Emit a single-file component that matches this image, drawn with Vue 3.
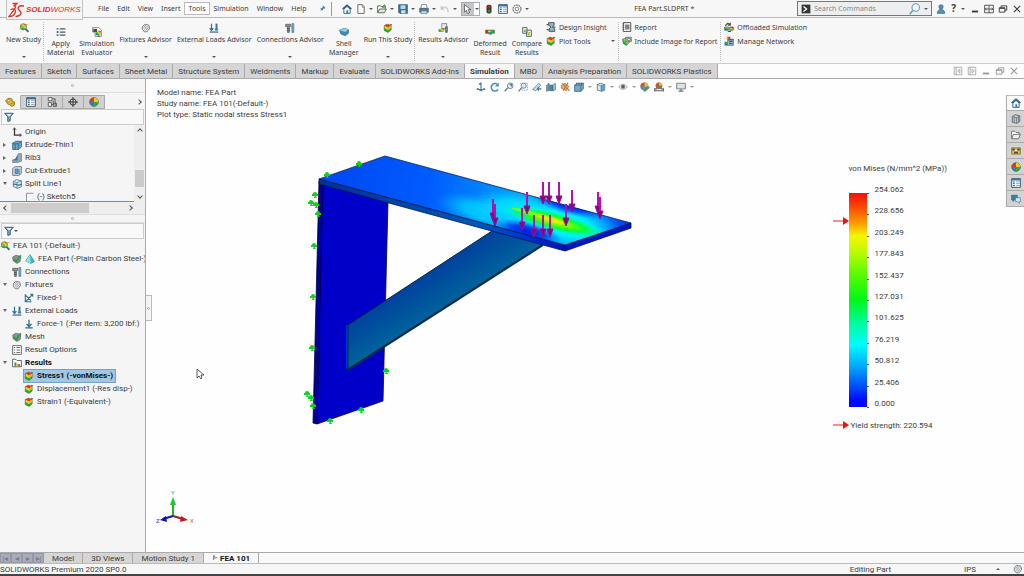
<template>
  <div class="app">
    <!-- icon sprite -->
    <svg class="sprite" aria-hidden="true">
      <defs>
        <linearGradient id="rainbow" x1="0" y1="1" x2="1" y2="0">
          <stop offset="0.1" stop-color="#2457d8" />
          <stop offset="0.35" stop-color="#17c84a" />
          <stop offset="0.6" stop-color="#e8e020" />
          <stop offset="0.85" stop-color="#e8281c" />
        </linearGradient>
      </defs>
      <symbol id="i-study" viewBox="0 0 16 16">
        <circle cx="7" cy="6" r="5" fill="url(#rainbow)" stroke="#596a75" />
        <path d="M10 9l5 5" stroke="#3d6d8d" stroke-width="3" />
        <path d="M1 10l5-5M9 4l5-2" stroke="#d6ac23" stroke-width="2" />
      </symbol>
      <symbol id="i-material" viewBox="0 0 16 16">
        <path d="M6 3h9M6 8h9M6 13h9" stroke="#4d5861" stroke-width="2" />
        <path d="M1 3h3" stroke="#4a90c0" stroke-width="3" />
        <path d="M1 8h3M1 13h3" stroke="#68727a" stroke-width="3" />
      </symbol>
      <symbol id="i-evaluator" viewBox="0 0 16 16">
        <path d="M3 1h8l4 4v10H5V8H1V1z" fill="#fff" stroke="#555" />
        <path d="M6 6h8v7H6z" fill="url(#rainbow)" />
        <path d="M2 3h6v5H2z" fill="#444c52" />
        <path d="M9 14l3 1" stroke="#445" stroke-width="2" />
      </symbol>
      <symbol id="i-fixture" viewBox="0 0 16 16">
        <path d="M2 6l4-4 6 1 2 5-4 6-5 0-3-4z" fill="#dde0e2" stroke="#777f84" stroke-width="1.4" />
        <path d="M5 10l5-5M7 12l5-5M4 7l4-4" stroke="#777f84" />
      </symbol>
      <symbol id="i-loads" viewBox="0 0 16 16">
        <path d="M4 1v10M1 8l3 4 3-4" fill="none" stroke="#356f95" stroke-width="2" />
        <path d="M12 1v9" stroke="#356f95" stroke-width="3" />
        <circle cx="12" cy="10" r="2.600" fill="#4a8cb5" />
        <path d="M1 14.500h14" stroke="#4c6b7e" stroke-width="2" />
      </symbol>
      <symbol id="i-connect" viewBox="0 0 16 16">
        <path d="M1 2h8v4H7v9H4V6H1z" fill="#858c91" stroke="#4b5359" />
        <path d="M3 9h5M3 12h5" stroke="#3c4348" />
        <path d="M11 1h3v14h-3z" fill="#79a9c5" stroke="#426d88" />
      </symbol>
      <symbol id="i-shell" viewBox="0 0 16 16">
        <path d="M1 5l7-3 7 2v6l-5 4-7-3z" fill="#3b8fb5" stroke="#245a74" />
        <path d="M1 5l7-3 7 2-5 4z" fill="#8fd0ea" />
      </symbol>
      <symbol id="i-plot" viewBox="0 0 16 16">
        <path d="M2 4l5-2 6 2v7l-5 4-6-3z" fill="#e8d922" stroke="#40583e" />
        <path d="M2 4l6 3 5-3-6-2z" fill="#e5371f" />
        <path d="M8 7l5-3v4l-5 4z" fill="#f0b41e" />
        <path d="M8 12l5-4v3l-5 4z" fill="#17a93f" />
        <path d="M2 8l6 3v4l-6-3z" fill="#17a93f" />
        <path d="M11 1l4 1-3 3z" fill="#6b7378" />
      </symbol>
      <symbol id="i-results" viewBox="0 0 16 16">
        <path d="M6 1h8v8H6z" fill="#e8eaeb" stroke="#4f5b64" />
        <path d="M1 9h9v5H1z" fill="url(#rainbow)" />
        <path d="M12 6h3v9h-3z" fill="#6d8799" stroke="#3d5565" />
      </symbol>
      <symbol id="i-deformed" viewBox="0 0 16 16">
        <path d="M1 5h14v5H1z" fill="#25b838" stroke="#365" />
        <path d="M1 5h4v5H1z" fill="#e22" />
        <path d="M5 6h4v2H5z" fill="#efdf1e" />
        <path d="M6 10h5v2H6z" fill="#2565bd" />
      </symbol>
      <symbol id="i-compare" viewBox="0 0 16 16">
        <path d="M1 1h7v9H1zM7 5h8v10H7z" fill="#edf0f1" stroke="#4d5a63" stroke-width="1.400" />
        <path d="M3 4h4v4H3zM9 8h4v5H9z" fill="url(#rainbow)" />
      </symbol>
      <symbol id="i-insight" viewBox="0 0 16 16">
        <path d="M4 1h9v4l-3 3 4 3v4H5v-4l3-3-4-3z" fill="#8bb5cb" stroke="#47565f" stroke-width="1.500" />
        <path d="M1 4h4M1 12h5M11 8h4" stroke="#555" stroke-width="2" />
      </symbol>
      <symbol id="i-report" viewBox="0 0 16 16">
        <path d="M2 1h12v14H2z" fill="#fff" stroke="#444" stroke-width="1.500" />
        <path d="M5 4h7v8H5z" fill="#7a8287" />
        <path d="M1 3h3M1 6h3M1 9h3M1 12h3" stroke="#444" />
      </symbol>
      <symbol id="i-image" viewBox="0 0 16 16">
        <path d="M1 5l6-2 5 2-1 6-4 4-5-3z" fill="url(#rainbow)" stroke="#555" />
        <path d="M6 2h9v7H6z" fill="#a4b0b6" stroke="#555d62" />
        <circle cx="11" cy="5.500" r="2" fill="#f2f2f2" stroke="#555" />
      </symbol>
      <symbol id="i-offload" viewBox="0 0 16 16">
        <path d="M1 8h6v5H1zM9 8h6v5H9z" fill="url(#rainbow)" stroke="#4c5357" />
        <path d="M2 6l4-4 4 2M10 1v4H6M6 15h5" fill="none" stroke="#4c5357" stroke-width="2" />
      </symbol>
      <symbol id="i-network" viewBox="0 0 16 16">
        <path d="M4 1h6v4H4zM1 9h6v6H1z" fill="url(#rainbow)" />
        <path d="M6 5h9v10H6z" fill="#b6cbd8" stroke="#445b69" />
        <path d="M6 6h9M8 9h6M8 12h6" stroke="#315d80" stroke-width="2" />
      </symbol>
      <symbol id="i-home" viewBox="0 0 16 16">
        <path d="M3 8v7h10V8L8 4z" fill="#fff" stroke="#2d668c" stroke-width="1.500" />
        <path d="M1 8l7-6 7 6" fill="none" stroke="#24597d" stroke-width="2.400" />
        <path d="M7 10h3v5H7z" fill="#397ba3" />
      </symbol>
      <symbol id="i-doc" viewBox="0 0 16 16">
        <path d="M3 1h7l3 3v11H3z" fill="#fff" stroke="#555" stroke-width="1.400" />
        <path d="M10 1v4h3" fill="none" stroke="#555" />
      </symbol>
      <symbol id="i-open" viewBox="0 0 16 16">
        <path d="M1 14V3h5l2 2h5v3" fill="#fff" stroke="#555" stroke-width="1.400" />
        <path d="M1 14l3-6h11l-3 6z" fill="#dce7d8" stroke="#556052" stroke-width="1.400" />
        <path d="M8 5l4-3 2 3" fill="none" stroke="#45924a" stroke-width="2" />
      </symbol>
      <symbol id="i-files" viewBox="0 0 16 16">
        <path d="M1 14V2h5l2 2h5v3" fill="#fff" stroke="#666" stroke-width="1.400" />
        <path d="M1 14l3-7h11l-3 7z" fill="#eee" stroke="#666" stroke-width="1.400" />
      </symbol>
      <symbol id="i-save" viewBox="0 0 16 16">
        <path d="M1 1h14v14H3l-2-2z" fill="#376f97" stroke="#244e6c" />
        <path d="M4 2h8v6H4z" fill="#bed5e4" />
        <path d="M5 10h7v5H5z" fill="#dadfe3" />
      </symbol>
      <symbol id="i-print" viewBox="0 0 16 16">
        <path d="M4 1h8l1 6H3z" fill="#fff" stroke="#555" />
        <path d="M1 7h14v6H1z" fill="#57819b" stroke="#34546a" />
        <path d="M3 11h10v4H3z" fill="#d7e8f1" stroke="#34546a" />
      </symbol>
      <symbol id="i-undo" viewBox="0 0 16 16">
        <path d="M2 3v5h5M2 8c5-6 11-3 11 5" fill="none" stroke="#c5c9cb" stroke-width="2" />
      </symbol>
      <symbol id="i-cursor" viewBox="0 0 16 16">
        <path d="M4 1v12l3-3 2 5 3-1-2-5h4z" fill="#fff" stroke="#333" />
      </symbol>
      <symbol id="i-traffic" viewBox="0 0 16 16">
        <rect x="4" y="1" width="8" height="14" rx="3" fill="#333" />
        <circle cx="8" cy="4.500" r="2.500" fill="#d3201e" />
        <circle cx="8" cy="11" r="2.500" fill="#2f8b38" />
      </symbol>
      <symbol id="i-list" viewBox="0 0 16 16">
        <path d="M1 1h14v14H1z" fill="#fff" stroke="#3c5666" stroke-width="1.500" />
        <path d="M1 2.500h14" stroke="#3676a3" stroke-width="3" />
        <path d="M3 6h3M3 9h3M3 12h3" stroke="#3676a3" stroke-width="2" />
        <path d="M8 6h6M8 9h6M8 12h6" stroke="#68757d" />
      </symbol>
      <symbol id="i-gear" viewBox="0 0 16 16">
        <circle cx="8" cy="8" r="6.400" fill="#fff" stroke="#777" stroke-width="2" stroke-dasharray="3 1" />
        <circle cx="8" cy="8" r="3" fill="none" stroke="#777" stroke-width="1.400" />
      </symbol>
      <symbol id="i-pin" viewBox="0 0 16 16">
        <path d="M9 1l6 6-2 1-3 0-2 5-2-2-5 4 4-5-2-2 5-2z" fill="#357eaf" />
      </symbol>
      <symbol id="i-prompt" viewBox="0 0 16 16">
        <path d="M1 1h14v14H1z" fill="#34373a" />
        <path d="M4 4l5 4-5 4" fill="none" stroke="#fff" stroke-width="2" />
      </symbol>
      <symbol id="i-search" viewBox="0 0 16 16">
        <circle cx="9" cy="6" r="5" fill="#eef6fa" stroke="#6d9bba" stroke-width="1.500" />
        <path d="M5 10l-4 5" stroke="#6d9bba" stroke-width="2" />
      </symbol>
      <symbol id="i-user" viewBox="0 0 16 16">
        <circle cx="8" cy="4.500" r="3.500" fill="#4e91ba" stroke="#2e6589" />
        <path d="M2 15c0-9 12-9 12 0z" fill="#4e91ba" stroke="#2e6589" />
      </symbol>
      <symbol id="i-min" viewBox="0 0 16 16">
        <path d="M3 12h10" stroke="currentColor" stroke-width="3" />
      </symbol>
      <symbol id="i-span" viewBox="0 0 16 16">
        <path d="M1 2h14v12H1zM8 2v12M2 8h12M4 6L2 8l2 2M12 6l2 2-2 2" fill="none" stroke="currentColor" stroke-width="1.300" />
      </symbol>
      <symbol id="i-restore" viewBox="0 0 16 16">
        <path d="M5 6V3h9v7h-3M2 6h9v7H2zM2 7h9" fill="none" stroke="currentColor" stroke-width="1.500" />
      </symbol>
      <symbol id="i-close" viewBox="0 0 16 16">
        <path d="M3 3l10 10M13 3L3 13" stroke="currentColor" stroke-width="1.700" />
      </symbol>
      <symbol id="i-dockl" viewBox="0 0 16 16">
        <path d="M2 2h12v12H2zM5 2v12M11 5v6L7.500 8z" fill="none" stroke="currentColor" stroke-width="1.200" />
      </symbol>
      <symbol id="i-dockr" viewBox="0 0 16 16">
        <path d="M2 2h12v12H2zM5 2v12M8 5v6l4-3z" fill="none" stroke="currentColor" stroke-width="1.200" />
      </symbol>
      <symbol id="i-part" viewBox="0 0 16 16">
        <path d="M1 6l4-4 6 1 1 4 3 1v5l-4 2-4-3-3-1z" fill="#e8b72e" stroke="#8a6818" stroke-width="1.300" />
        <circle cx="6" cy="6" r="2" fill="#fff4bf" stroke="#8a6818" />
        <path d="M9 11l5-2" stroke="#8a6818" />
      </symbol>
      <symbol id="i-config" viewBox="0 0 16 16">
        <path d="M2 1h6v5H2zM2 9h5v6H2z" fill="#fff" stroke="#555" stroke-width="1.500" />
        <path d="M8 3h5v11M7 12h3M10 6v9h5v-5h-5" fill="none" stroke="#555" stroke-width="1.500" />
      </symbol>
      <symbol id="i-target" viewBox="0 0 16 16">
        <circle cx="8" cy="8" r="5" fill="none" stroke="#333" stroke-width="1.500" />
        <path d="M8 0v16M0 8h16" stroke="#333" stroke-width="1.600" />
      </symbol>
      <symbol id="i-ball" viewBox="0 0 16 16">
        <circle cx="8" cy="8" r="7" fill="#2f80c0" stroke="#555" />
        <path d="M8 8V1a7 7 0 0 1 7 7z" fill="#efce25" />
        <path d="M8 8H1a7 7 0 0 1 7-7z" fill="#d63c2b" />
        <path d="M8 8h7a7 7 0 0 1-7 7z" fill="#36a548" />
      </symbol>
      <symbol id="i-funnel" viewBox="0 0 16 16">
        <path d="M1 2h14L10 8v6l-4 1V8z" fill="#7aa3bd" stroke="#38566a" stroke-width="1.400" />
        <path d="M4 3h8L8 7z" fill="#e9f3f8" />
      </symbol>
      <symbol id="i-origin" viewBox="0 0 16 16">
        <path d="M4 2v11h11" fill="none" stroke="#333" stroke-width="2" />
        <path d="M1 5l3-4 3 4M12 10l3 3-3 3" fill="none" stroke="#333" />
      </symbol>
      <symbol id="i-extrude" viewBox="0 0 16 16">
        <path d="M1 5l5-3h9v9l-4 4H1z" fill="#69a9cb" stroke="#2c617f" stroke-width="1.300" />
        <path d="M1 6h9v8M10 6l5-4M5 6v9" fill="none" stroke="#2c617f" stroke-width="1.300" />
      </symbol>
      <symbol id="i-rib" viewBox="0 0 16 16">
        <path d="M10 1h5v12l-6 2H1v-4l5-1z" fill="#9ba9b1" stroke="#52646f" />
        <path d="M9 4v8H3z" fill="#267fae" />
      </symbol>
      <symbol id="i-cut" viewBox="0 0 16 16">
        <path d="M1 4l4-3h10v11l-4 3H1z" fill="#cfd9de" stroke="#596c77" stroke-width="1.300" />
        <path d="M5 5h5v7H5z" fill="#5f9fc3" stroke="#2b607f" />
        <path d="M12 5v9" stroke="#596c77" />
      </symbol>
      <symbol id="i-split" viewBox="0 0 16 16">
        <path d="M2 4l5-3 8 2v9l-6 3-7-3z" fill="#dbe8ef" stroke="#4c6c7e" stroke-width="1.300" />
        <path d="M2 4l6 2 7-3M8 6v9" fill="none" stroke="#4c6c7e" />
        <path d="M2 9c4-3 7 4 13-1" fill="none" stroke="#2a78a9" stroke-width="2" />
      </symbol>
      <symbol id="i-sketch" viewBox="0 0 16 16">
        <path d="M4 15V2h11" fill="none" stroke="#8b9194" stroke-width="1.500" />
      </symbol>
      <symbol id="i-check" viewBox="0 0 16 16">
        <path d="M1 5l5-3 8 2-1 8-5 3-6-4z" fill="#8c9498" stroke="#4d555a" />
        <path d="M3 8l4 4 7-10" fill="none" stroke="#2b9c3b" stroke-width="2.500" />
      </symbol>
      <symbol id="i-cone" viewBox="0 0 16 16">
        <path d="M8 1l7 11-6 3-8-4z" fill="#38b9c5" stroke="#237c8a" />
        <path d="M8 1L9 15l-8-4z" fill="#91e0e4" />
      </symbol>
      <symbol id="i-fixed" viewBox="0 0 16 16">
        <path d="M2 2v12h10M2 14L14 2M10 2h4v4M3 4l8 8" fill="none" stroke="#356f95" stroke-width="1.700" />
      </symbol>
      <symbol id="i-force" viewBox="0 0 16 16">
        <path d="M8 1v10M4 8l4 4 4-4M2 14h12" fill="none" stroke="#286894" stroke-width="2" />
      </symbol>
      <symbol id="i-options" viewBox="0 0 16 16">
        <path d="M1 1h14v14H1z" fill="#fff" stroke="#666" stroke-width="1.500" />
        <path d="M3 4h2M3 8h2M3 12h2M7 4h6M7 8h6M7 12h6" stroke="#666" stroke-width="1.500" />
      </symbol>
      <symbol id="i-folder" viewBox="0 0 16 16">
        <path d="M1 14V2h5l2 2h7v10z" fill="#fff" stroke="#555" stroke-width="1.400" />
        <path d="M4 7h3v6H4z" fill="#25a346" />
        <path d="M7 9h3v4H7z" fill="#e7b925" />
        <path d="M10 10h3v3h-3z" fill="#d13224" />
      </symbol>
      <symbol id="i-library" viewBox="0 0 16 16">
        <path d="M2 4l5-3 7 2v9l-5 3-7-2z" fill="#bdc3c6" stroke="#5b6266" stroke-width="1.300" />
        <path d="M2 4l7 2 5-3M9 6v9M5 5v8M12 5v8" fill="none" stroke="#5b6266" />
      </symbol>
      <symbol id="i-palette" viewBox="0 0 16 16">
        <path d="M1 3h14v10H1z" fill="#e0b33a" stroke="#705d2b" />
        <path d="M2 4h4v3H2zM10 4h4v3h-4zM5 9h6v3H5z" fill="#3f5055" />
        <path d="M6 6h4v2H6z" fill="#fff3c0" />
      </symbol>
      <symbol id="i-chat" viewBox="0 0 16 16">
        <path d="M1 2h9v7H6l-3 3V9H1z" fill="#3780ae" stroke="#275979" />
        <path d="M7 6h8v6h-2v3l-3-3H7z" fill="#d9e5ec" stroke="#4e6c7e" />
      </symbol>
      <symbol id="i-orient" viewBox="0 0 16 16">
        <path d="M8 1v10M5 4l3-3M2 10l6 4 6-4M1 12h14" fill="none" stroke="#537b94" stroke-width="1.800" />
      </symbol>
      <symbol id="i-rotate" viewBox="0 0 16 16">
        <path d="M13 12A6 6 0 1 1 12 4" fill="none" stroke="#4a8cb5" stroke-width="2.400" />
        <path d="M14 1v6H8z" fill="#4a8cb5" />
      </symbol>
      <symbol id="i-zoom" viewBox="0 0 16 16">
        <circle cx="10" cy="6" r="4.500" fill="#e4eff5" stroke="#6b7e8a" stroke-width="1.500" />
        <path d="M6 9l-5 6M9 4h3v3" fill="none" stroke="#5d7482" stroke-width="2" />
      </symbol>
      <symbol id="i-zoomarea" viewBox="0 0 16 16">
        <path d="M3 2h12v11H5" fill="none" stroke="#6c7b84" stroke-dasharray="2 1" />
        <circle cx="9" cy="6" r="4" fill="#dceaf2" stroke="#668aa0" stroke-width="1.500" />
        <path d="M6 9l-5 6" stroke="#5d7482" stroke-width="2" />
      </symbol>
      <symbol id="i-prev" viewBox="0 0 16 16">
        <path d="M1 12L11 2l3 3L6 14z" fill="#cfdbe2" stroke="#62747f" stroke-width="1.200" />
        <path d="M15 11H9l2-3M9 11l2 3" fill="none" stroke="#357ca8" stroke-width="2" />
      </symbol>
      <symbol id="i-section" viewBox="0 0 16 16">
        <path d="M1 5l4-3v11l-4 2z" fill="#859ba7" stroke="#3f5968" />
        <path d="M6 5h5v9H6z" fill="#3d8cba" stroke="#275e81" />
        <path d="M11 5l4-3v10l-4 2z" fill="#a9c7d8" stroke="#3f5968" />
      </symbol>
      <symbol id="i-dynamic" viewBox="0 0 16 16">
        <path d="M2 5l6-3 6 5-4 7-8-4z" fill="#dcb46a" stroke="#7a705e" />
        <path d="M4 2l4 5M13 1L5 14M10 9l5 5" stroke="#cf6e30" stroke-width="1.700" />
      </symbol>
      <symbol id="i-cube" viewBox="0 0 16 16">
        <path d="M1 5l4-3h10v9l-4 4H1z" fill="#75a9c6" stroke="#416a82" stroke-width="1.300" />
        <path d="M1 5h10v10M11 5l4-3" fill="none" stroke="#416a82" stroke-width="1.300" />
        <path d="M4 1v3M8 1v3M12 1v3" stroke="#46545c" />
      </symbol>
      <symbol id="i-display" viewBox="0 0 16 16">
        <path d="M2 4l5-2 7 2v9l-5 2-7-2z" fill="#d6e8f2" stroke="#50788f" stroke-width="1.300" />
        <path d="M8 6v9l6-2V4z" fill="#5e9cc0" />
        <path d="M2 4l6 2 6-2M8 6v9" fill="none" stroke="#50788f" />
      </symbol>
      <symbol id="i-eye" viewBox="0 0 16 16">
        <path d="M1 8c4-6 10-6 14 0-4 5-10 5-14 0z" fill="#e1e4e6" stroke="#8a8f92" />
        <circle cx="8" cy="7.500" r="3" fill="#596167" />
      </symbol>
      <symbol id="i-appearance" viewBox="0 0 16 16">
        <circle cx="7" cy="7" r="6" fill="#4d94c8" stroke="#777" />
        <path d="M7 7V1a6 6 0 0 1 6 6z" fill="#e9c824" />
        <path d="M7 7H1a6 6 0 0 1 6-6z" fill="#d8502e" />
        <path d="M6 14l7-7 2 2-7 6z" fill="#58a860" stroke="#666" />
      </symbol>
      <symbol id="i-scene" viewBox="0 0 16 16">
        <circle cx="8" cy="6" r="5" fill="#d8502e" stroke="#666" />
        <path d="M8 6V1a5 5 0 0 1 5 5z" fill="#e9c824" />
        <path d="M8 6h5a5 5 0 0 1-5 5z" fill="#38a24a" />
        <path d="M1 15v-4h4M15 15v-4h-4M1 14h14" fill="none" stroke="#5e6266" stroke-width="1.700" />
      </symbol>
      <symbol id="i-monitor" viewBox="0 0 16 16">
        <path d="M1 2h14v9H1z" fill="#dbe3e7" stroke="#70797e" stroke-width="1.400" />
        <path d="M8 11v3M4 14.500h8" stroke="#70797e" stroke-width="2" />
      </symbol>
      <symbol id="i-flag" viewBox="0 0 16 16">
        <path d="M4 1v11l6-5h4M7 1v6" fill="none" stroke="#51626e" stroke-width="2" />
      </symbol>
    </svg>

    <header class="titlebar">
      <div class="logo">
        <svg viewBox="0 0 32 32" aria-hidden="true">
          <path
            d="M10 3h8c-3 3-5 4-7 5 6-1 5 4 1 6M6 15c6-3 11 1 8 7-2 5-6 7-12 7 4-5 6-9 9-12M31 8c-8-2-14 3-9 8 6 5 6 11-6 13"
            fill="none" stroke="#d8352a" stroke-width="2.600" stroke-linecap="round"
          />
        </svg>
        <span><b>SOLID</b>WORKS</span>
      </div>
      <nav class="menu">
        <button v-for="item in menus" :key="item" type="button" :class="{ open: item === 'Tools' }">{{ item }}</button>
        <button type="button" class="pin" aria-label="Pin menu"><Icon name="pin" class="small" /></button>
      </nav>
      <div class="quick">
        <button
          v-for="tool in quickTools" :key="tool.icon" type="button"
          :aria-label="tool.label" :class="{ pressed: tool.icon === 'cursor' }"
        >
          <Icon :name="tool.icon" /><i v-if="tool.menu" class="caret"></i>
        </button>
      </div>
      <h1>FEA Part.SLDPRT *</h1>
      <div class="search">
        <Icon name="prompt" />
        <input type="text" placeholder="Search Commands" aria-label="Search Commands">
        <Icon name="search" class="large" />
        <i class="caret"></i>
      </div>
      <div class="window-tools">
        <button type="button" aria-label="Account"><Icon name="user" /></button>
        <button type="button" class="help" aria-label="Help">?<i class="caret"></i></button>
        <button v-for="b in ['min', 'span', 'restore', 'close']" :key="b" type="button" :aria-label="b">
          <Icon :name="b" />
        </button>
      </div>
    </header>

    <section class="ribbon">
      <div v-for="(group, g) in ribbon" :key="g" class="group">
        <button v-for="cmd in group" :key="cmd.icon" type="button" class="command" :class="{ tall: cmd.lines.length > 1 }">
          <Icon :name="cmd.icon" />
          <span v-for="line in cmd.lines" :key="line">{{ line }}</span>
          <i v-if="cmd.menu" class="caret"></i>
        </button>
      </div>
      <div v-for="(stack, s) in ribbonStacks" :key="'s' + s" class="stack">
        <button v-for="cmd in stack" :key="cmd.icon" type="button">
          <Icon :name="cmd.icon" /><span>{{ cmd.label }}</span><i v-if="cmd.menu" class="caret"></i>
        </button>
      </div>
    </section>

    <nav class="ribbon-tabs">
      <button
        v-for="tab in ribbonTabs" :key="tab" type="button"
        :class="{ active: tab === activeTab }" @click="activeTab = tab"
      >{{ tab }}</button>
      <div class="doc-tools">
        <button v-for="b in ['dockl', 'dockr', 'min', 'restore', 'close']" :key="b" type="button" :aria-label="'Document ' + b">
          <Icon :name="b" />
        </button>
      </div>
    </nav>

    <main class="workspace">
      <aside class="panel">
        <div class="splitter"><i></i></div>
        <div class="panel-tabs">
          <button
            v-for="(tab, i) in panelTabs" :key="tab" type="button"
            :class="{ active: i === 0 }" :aria-label="tab"
          ><Icon :name="tab" /></button>
          <button type="button" class="more" aria-label="More"><i class="chev right"></i></button>
        </div>
        <label class="filter"><Icon name="funnel" /><input type="text" aria-label="Filter features"></label>
        <div class="feature-tree">
          <ul class="tree">
            <li v-for="row in features" :key="row.text" :class="'level' + row.level">
              <i class="twist" :class="row.twist"></i>
              <div class="node"><Icon :name="row.icon" /><span>{{ row.text }}</span></div>
            </li>
          </ul>
          <div class="vscroll"><i class="chev up"></i><b></b><i class="chev down"></i></div>
        </div>
        <div class="hscroll"><i class="chev left"></i><b></b><i class="chev right"></i></div>
        <div class="splitter lower"><i></i></div>
        <label class="filter"><Icon name="funnel" /><i class="caret"></i><input type="text" aria-label="Filter study"></label>
        <ul class="tree study">
          <li
            v-for="row in study" :key="row.text"
            :class="['level' + row.level, { bold: row.bold, selected: row.text === selected }]"
            @click="selected = row.text"
          >
            <i class="twist" :class="row.twist"></i>
            <div class="node">
              <Icon :name="row.icon" /><Icon v-if="row.icon2" :name="row.icon2" /><span>{{ row.text }}</span>
            </div>
          </li>
        </ul>
      </aside>

      <section class="viewport">
        <svg class="model" viewBox="146 79 878 473" role="img" aria-label="Stress plot of bracket">
          <defs>
            <linearGradient id="plate" gradientUnits="userSpaceOnUse" x1="320" y1="175" x2="630" y2="230">
              <stop offset="0" stop-color="#0046f2" />
              <stop offset="0.35" stop-color="#005cff" />
              <stop offset="0.52" stop-color="#0084ff" />
              <stop offset="0.64" stop-color="#00a8fa" />
              <stop offset="0.84" stop-color="#00a8ff" />
              <stop offset="1" stop-color="#002cf0" />
            </linearGradient>
            <linearGradient id="brace" gradientUnits="userSpaceOnUse" x1="430" y1="265" x2="455" y2="304">
              <stop offset="0" stop-color="#003d9e" />
              <stop offset="1" stop-color="#00659c" />
            </linearGradient>
            <linearGradient id="edge">
              <stop offset="0" stop-color="#002f9c" />
              <stop offset="0.65" stop-color="#0058b8" />
              <stop offset="0.8" stop-color="#0038ce" />
              <stop offset="1" stop-color="#0010c0" />
            </linearGradient>
            <radialGradient id="cyan">
              <stop offset="0" stop-color="#00ffff" />
              <stop offset="0.45" stop-color="#00f4ff" stop-opacity="0.9" />
              <stop offset="1" stop-color="#00c8ff" stop-opacity="0" />
            </radialGradient>
            <radialGradient id="hot">
              <stop offset="0" stop-color="#c8ff00" />
              <stop offset="0.3" stop-color="#6dff00" />
              <stop offset="0.6" stop-color="#00ff40" />
              <stop offset="1" stop-color="#00ffc0" stop-opacity="0" />
            </radialGradient>
            <radialGradient id="cold">
              <stop offset="0" stop-color="#0018e8" />
              <stop offset="0.5" stop-color="#0034f4" stop-opacity="0.85" />
              <stop offset="1" stop-color="#0070ff" stop-opacity="0" />
            </radialGradient>
            <clipPath id="topface"><path d="M319 179L385 156L631 223L565 245Z" /></clipPath>
          </defs>
          <path d="M322 184L388 201L383 401L317 424Z" fill="#0000c8" stroke="#00003c" stroke-width="0.800" />
          <path d="M319 181L323 185L317 424L313 423Z" fill="#00009a" stroke="#00003c" stroke-width="0.800" />
          <path d="M347 325L347 369" stroke="#0050d8" stroke-width="2" opacity="0.600" />
          <path d="M348 325L492 231L500 232L543 244L348 369Z" fill="url(#brace)" stroke="#06283c" />
          <path d="M348 370L543 245" stroke="#042c44" stroke-width="2" />
          <path d="M319 179L565 245L565 251L319 184Z" fill="url(#edge)" stroke="#001a50" stroke-width="0.800" />
          <path d="M565 245L631 223L631 228L565 251Z" fill="#0018c4" stroke="#000a48" stroke-width="0.800" />
          <g clip-path="url(#topface)">
            <path d="M319 179L385 156L631 223L565 245Z" fill="url(#plate)" />
            <g transform="rotate(15 530 215)">
              <ellipse cx="487" cy="224" rx="52" ry="16" fill="url(#cyan)" opacity="0.600" />
              <ellipse cx="518" cy="212" rx="46" ry="16" fill="url(#cyan)" opacity="0.700" />
              <ellipse cx="565" cy="215" rx="68" ry="24" fill="url(#cyan)" />
              <ellipse cx="566" cy="195" rx="40" ry="10" fill="url(#cold)" />
              <ellipse cx="532" cy="232" rx="36" ry="10" fill="url(#cold)" />
              <ellipse cx="555" cy="215" rx="54" ry="10" fill="url(#hot)" />
              <ellipse cx="534" cy="213" rx="24" ry="2" fill="#a8ff00" opacity="0.600" />
              <ellipse cx="552" cy="214" rx="14" ry="2" fill="#f0e800" opacity="0.800" />
            </g>
          </g>
          <path d="M319 179L385 156L631 223L565 245Z" fill="none" stroke="#00184c" stroke-width="0.800" />
          <g v-for="(f, i) in fixtures" :key="'f' + i" :transform="`translate(${f[0]} ${f[1]})`" fill="#10d020">
            <circle cy="-1" r="2" /><path d="M-3-1h6v2h-6zM0 0l2 3h-3z" />
          </g>
          <g v-for="(a, i) in loads" :key="'a' + i" :transform="`translate(${a[0]} ${a[1]})`">
            <path d="M0-21V-6" stroke="#b80cb4" stroke-width="2" />
            <path d="M-3-7h6L0 1z" fill="#7d0c78" stroke="#980c98" />
          </g>
          <path d="M197 369v9l2-2 2 3 1-1-1-3h3z" fill="#fff" stroke="#333" stroke-width="0.800" />
        </svg>

        <div class="view-left">
          <p class="notes">
            Model name: FEA Part<br>Study name: FEA 101(-Default-)<br>Plot type: Static nodal stress Stress1
          </p>
          <button type="button" class="handle" aria-label="Collapse panel"><i></i></button>
          <svg class="triad" viewBox="0 0 44 40" aria-hidden="true">
            <path d="M19 28V15" stroke="#18b828" stroke-width="2" />
            <path d="M16 17l3-8 3 8z" fill="#18c828" />
            <path d="M19 28l10 3" stroke="#a81820" stroke-width="2" />
            <path d="M27 28l7 4-8 2z" fill="#c01820" />
            <path d="M19 28L9 31" stroke="#1414a8" stroke-width="2" />
            <path d="M12 28l-6 4 7 2z" fill="#1010b0" />
            <text x="17" y="7" fill="#30b840">Y</text>
            <text x="36" y="35" fill="#d85858">X</text>
            <text x="2" y="35" fill="#3838c0">Z</text>
          </svg>
        </div>

        <div class="view-tools">
          <button v-for="tool in viewTools" :key="tool.icon" type="button" :aria-label="tool.icon">
            <Icon :name="tool.icon" /><i v-if="tool.menu" class="caret"></i>
          </button>
        </div>

        <div class="view-right">
          <div class="legend">
            <h2>von Mises (N/mm^2 (MPa))</h2>
            <div class="scale">
              <svg class="marker" viewBox="0 0 16 10" aria-hidden="true"><path d="M0 5h12" stroke="#e22" /><path d="M10 1l6 4-6 4z" fill="#f01010" /></svg>
              <div class="bar"></div>
              <ol>
                <li v-for="v in legend" :key="v">{{ v }}</li>
              </ol>
            </div>
            <div class="yield">
              <svg class="marker" viewBox="0 0 16 10" aria-hidden="true"><path d="M0 5h12" stroke="#e22" /><path d="M10 1l6 4-6 4z" fill="#f01010" /></svg>
              <span>Yield strength: 220.594</span>
            </div>
          </div>
          <nav class="taskpane">
            <button v-for="(p, i) in taskPane" :key="p" type="button" :class="{ active: i === 0 }" :aria-label="p">
              <Icon :name="p" />
            </button>
          </nav>
        </div>
      </section>
    </main>

    <nav class="sheet-tabs">
      <div class="steps">
        <button v-for="s in steps" :key="s.label" type="button" :aria-label="s.label">{{ s.glyph }}</button>
      </div>
      <button v-for="tab in sheets" :key="tab" type="button" class="sheet" :class="{ active: tab === 'FEA 101' }">
        <Icon v-if="tab === 'FEA 101'" name="flag" class="tiny" />{{ tab }}
      </button>
      <div class="rest"></div>
    </nav>

    <footer class="status">
      <span>SOLIDWORKS Premium 2020 SP0.0</span>
      <span class="mode">Editing Part</span>
      <button type="button" class="units">IPS<i class="caret flip"></i></button>
      <Icon name="fixture" />
    </footer>
  </div>
</template>

<script setup>
import { ref, h } from 'vue'

const Icon = (props) => h('svg', { class: 'icon', 'aria-hidden': 'true' }, [h('use', { href: `#i-${props.name}` })])
Icon.props = ['name']

const menus = ['File', 'Edit', 'View', 'Insert', 'Tools', 'Simulation', 'Window', 'Help']

const quickTools = [
  { icon: 'home', label: 'Home' },
  { icon: 'doc', label: 'New', menu: true },
  { icon: 'open', label: 'Open', menu: true },
  { icon: 'save', label: 'Save', menu: true },
  { icon: 'print', label: 'Print', menu: true },
  { icon: 'undo', label: 'Undo', menu: true },
  { icon: 'cursor', label: 'Select', menu: true },
  { icon: 'traffic', label: 'Rebuild' },
  { icon: 'list', label: 'File Properties' },
  { icon: 'gear', label: 'Options', menu: true }
]

const ribbon = [
  [{ icon: 'study', lines: ['New Study'], menu: true }],
  [
    { icon: 'material', lines: ['Apply', 'Material'] },
    { icon: 'evaluator', lines: ['Simulation', 'Evaluator'] },
    { icon: 'fixture', lines: ['Fixtures Advisor'], menu: true },
    { icon: 'loads', lines: ['External Loads Advisor'], menu: true },
    { icon: 'connect', lines: ['Connections Advisor'], menu: true },
    { icon: 'shell', lines: ['Shell', 'Manager'] },
    { icon: 'plot', lines: ['Run This Study'], menu: true }
  ],
  [
    { icon: 'results', lines: ['Results Advisor'], menu: true },
    { icon: 'deformed', lines: ['Deformed', 'Result'] },
    { icon: 'compare', lines: ['Compare', 'Results'] }
  ]
]

const ribbonStacks = [
  [{ icon: 'insight', label: 'Design Insight' }, { icon: 'plot', label: 'Plot Tools', menu: true }],
  [{ icon: 'report', label: 'Report' }, { icon: 'image', label: 'Include Image for Report' }],
  [{ icon: 'offload', label: 'Offloaded Simulation' }, { icon: 'network', label: 'Manage Network' }]
]

const ribbonTabs = [
  'Features', 'Sketch', 'Surfaces', 'Sheet Metal', 'Structure System', 'Weldments', 'Markup', 'Evaluate',
  'SOLIDWORKS Add-Ins', 'Simulation', 'MBD', 'Analysis Preparation', 'SOLIDWORKS Plastics'
]
const activeTab = ref('Simulation')

const panelTabs = ['part', 'list', 'config', 'target', 'ball']

const features = [
  { level: 1, icon: 'origin', text: 'Origin' },
  { level: 1, icon: 'extrude', text: 'Extrude-Thin1', twist: 'closed' },
  { level: 1, icon: 'rib', text: 'Rib3', twist: 'closed' },
  { level: 1, icon: 'cut', text: 'Cut-Extrude1', twist: 'closed' },
  { level: 1, icon: 'split', text: 'Split Line1', twist: 'opened' },
  { level: 2, icon: 'sketch', text: '(-) Sketch5' }
]

const study = [
  { level: 0, icon: 'study', text: 'FEA 101 (-Default-)' },
  { level: 1, icon: 'check', icon2: 'cone', text: 'FEA Part (-Plain Carbon Steel-)' },
  { level: 1, icon: 'connect', text: 'Connections' },
  { level: 1, icon: 'fixture', text: 'Fixtures', twist: 'opened' },
  { level: 2, icon: 'fixed', text: 'Fixed-1' },
  { level: 1, icon: 'loads', text: 'External Loads', twist: 'opened' },
  { level: 2, icon: 'force', text: 'Force-1 (:Per item: 3,200 lbf:)' },
  { level: 1, icon: 'check', text: 'Mesh' },
  { level: 1, icon: 'options', text: 'Result Options' },
  { level: 1, icon: 'folder', text: 'Results', twist: 'opened', bold: true },
  { level: 2, icon: 'plot', text: 'Stress1 (-vonMises-)', bold: true },
  { level: 2, icon: 'plot', text: 'Displacement1 (-Res disp-)' },
  { level: 2, icon: 'plot', text: 'Strain1 (-Equivalent-)' }
]
const selected = ref('Stress1 (-vonMises-)')

const viewTools = [
  { icon: 'orient' }, { icon: 'rotate' }, { icon: 'zoom' }, { icon: 'zoomarea' }, { icon: 'prev' },
  { icon: 'section' }, { icon: 'dynamic' }, { icon: 'cube', menu: true }, { icon: 'display', menu: true },
  { icon: 'eye', menu: true }, { icon: 'appearance' }, { icon: 'scene', menu: true }, { icon: 'monitor', menu: true }
]

const legend = [
  '254.062', '228.656', '203.249', '177.843', '152.437', '127.031', '101.625', '76.219', '50.812', '25.406', '0.000'
]

const taskPane = ['home', 'library', 'files', 'palette', 'ball', 'list', 'chat']

// tips of the force arrows and anchor points of the fixtures, in model units
const loads = [
  [527, 213], [522, 229], [543, 203], [549, 203], [559, 203], [572, 211], [534, 236], [543, 236], [550, 236],
  [566, 225], [598, 213], [600, 218], [493, 220], [495, 225]
]
const fixtures = [
  [327, 175], [359, 164], [315, 195], [311, 203], [316, 205], [318, 214], [314, 246], [313, 297], [312, 348],
  [386, 371], [307, 394], [311, 398], [313, 406], [330, 421], [361, 410]
]

const steps = [
  { label: 'First', glyph: '|◂' }, { label: 'Previous', glyph: '◂' },
  { label: 'Next', glyph: '▸' }, { label: 'Last', glyph: '▸|' }
]
const sheets = ['Model', '3D Views', 'Motion Study 1', 'FEA 101']
</script>

<style>
body {
  background: #fff;
}
</style>

<style scoped>
.app {
  display: flex;
  flex-direction: column;
  min-height: 100vh;
  box-sizing: border-box;
  border-bottom: 2px solid #444;
  font-family: "Noto Sans", "Open Sans", sans-serif;
  font-size: 7px;
  line-height: 9px;
  color: #3c3c3c;
  background: #f6f6f6;
}

.app *,
.app *::before {
  box-sizing: border-box;
}

.sprite {
  position: absolute;
  width: 0;
  height: 0;
}

button,
input {
  margin: 0;
  padding: 0;
  border: 0;
  background: none;
  font: inherit;
  color: inherit;
}

button {
  display: flex;
  align-items: center;
  white-space: nowrap;
}

ul,
ol,
p,
h1,
h2 {
  margin: 0;
  padding: 0;
  list-style: none;
  font-size: inherit;
  font-weight: 400;
}

.ribbon-tabs,
.workspace,
.sheet-tabs,
.status {
  font-family: Roboto, "Noto Sans", sans-serif;
  font-size: 8px;
}

.icon {
  display: block;
  flex: none;
  width: 10px;
  height: 10px;
}

.icon.small { width: 7px; height: 7px; }
.icon.large { width: 12px; height: 12px; }
.icon.tiny { width: 6px; height: 6px; margin-right: 2px; }

.caret {
  flex: none;
  width: 3px;
  border: 2px solid transparent;
  border-top-color: #555;
  border-bottom: 0;
}

.caret.flip {
  transform: rotate(180deg);
}

/* Title bar */
.titlebar {
  display: flex;
  align-items: center;
  height: 18px;
  border-bottom: 1px solid #b8b8b8;
  background: #f7f7f7;
}

.logo {
  display: flex;
  align-items: center;
  align-self: flex-start;
  gap: 2px;
  width: 77px;
  height: 20px;
  margin-left: 6px;
  padding: 0 1px;
  border: 1px solid #c4c4c4;
  border-top: 0;
  background: #f5f5f5;
  color: #dc3529;
  font-family: "Liberation Sans", sans-serif;
  font-size: 8px;
  font-style: italic;
  z-index: 1;
}

.logo svg {
  flex: none;
  width: 16px;
  height: 16px;
}

.menu {
  display: flex;
  align-items: center;
  margin-left: 11px;
}

.menu button {
  height: 13px;
  padding: 0 3px;
  border: 1px solid transparent;
}

.menu .open {
  border-color: #bbb;
  background: #fff;
}

.menu .pin {
  margin-left: 5px;
}

.quick {
  display: flex;
  align-items: center;
  gap: 4px;
  margin-left: 1px;
  padding-left: 10px;
  border-left: 1px solid #999;
}

.quick button {
  gap: 3px;
  height: 14px;
}

.quick .pressed {
  border: 1px solid #aaa;
  background: linear-gradient(90deg, #c3c6c8 12px, #fff 12px);
}

.titlebar h1 {
  flex: 1;
  padding-left: 2px;
  text-align: center;
}

.search {
  display: flex;
  align-items: center;
  gap: 3px;
  width: 135px;
  height: 15px;
  padding: 0 3px;
  border: 1px solid #777;
  background: #eceef0;
}

.search input {
  flex: 1;
  min-width: 0;
}

.search input::placeholder {
  color: #888;
}

.window-tools {
  display: flex;
  align-items: center;
  gap: 4px;
  margin: 0 2px 0 4px;
}

.help {
  gap: 5px;
  padding: 0 1px;
  font-size: 10px;
  font-weight: 700;
}

/* Ribbon */
.ribbon {
  display: flex;
  height: 46px;
  padding: 4px 0 2px 3px;
  border-bottom: 1px solid #ccc;
  background: #f7f7f7;
}

.group {
  display: flex;
  gap: 5px;
  padding: 0 2px 0 3px;
}

.group + .group,
.stack + .stack {
  border-left: 1px dotted #bbb;
}

.command {
  flex-direction: column;
  padding-top: 1px;
}

.command .icon {
  margin-bottom: 2px;
}

.command.tall {
  padding-top: 5px;
}

.command .caret {
  margin-top: auto;
  margin-bottom: 3px;
}

.stack {
  display: flex;
  flex-direction: column;
  gap: 4px;
  padding: 0 3px 0 2px;
}

.stack + .stack {
  padding: 0 3px;
}

.stack button {
  gap: 3px;
}

.stack .caret {
  margin-left: 17px;
}

.ribbon-tabs {
  display: flex;
  height: 15px;
  border-bottom: 1px solid #aaa;
  background: #fdfdfd;
}

.ribbon-tabs > button {
  padding: 0 5px;
  border-right: 1px solid #aaa;
  background: #d5d5d5;
}

.ribbon-tabs > .active {
  background: #f7f7f7;
  font-weight: 700;
}

.doc-tools {
  display: flex;
  gap: 4px;
  margin-left: auto;
  padding-right: 5px;
  color: #999;
}

/* Feature manager */
.workspace {
  display: flex;
  flex: 1;
}

.panel {
  flex: none;
  width: 146px;
  border-right: 1px solid #aaa;
  background: #f5f5f5;
}

.splitter {
  display: flex;
  align-items: center;
  justify-content: center;
  height: 14px;
  border-bottom: 1px solid #ddd;
}

.splitter.lower {
  height: 9px;
  border-top: 1px solid #ddd;
}

.splitter i,
.handle i {
  width: 3px;
  height: 3px;
  border: 1px solid #aaa;
  border-radius: 50%;
}

.panel-tabs {
  display: flex;
  height: 16px;
  padding-top: 2px;
}

.panel-tabs button {
  justify-content: center;
  width: 21px;
  border: 1px solid #aaa;
  border-left: 0;
  background: #d0d0d0;
}

.panel-tabs .active {
  border-color: transparent #aaa transparent transparent;
  background: #f5f5f5;
}

.panel-tabs .more {
  width: 12px;
  margin-left: auto;
  border: 0;
  background: none;
}

.filter {
  display: flex;
  align-items: center;
  height: 16px;
  margin: 0 1px;
  padding-left: 2px;
  border: 1px solid #ccc;
  background: #f9f9f9;
}

.filter input {
  flex: 1;
  min-width: 0;
}

.feature-tree {
  display: flex;
  height: 77px;
}

.tree {
  flex: 1;
  min-width: 0;
  overflow: hidden;
  border-bottom: 1px solid #3f9be0;
}

.tree li {
  display: flex;
  align-items: center;
  gap: 3px;
  height: 13px;
  white-space: nowrap;
}

.level0 { padding-left: 0; }
.level1 { padding-left: 3px; }
.level2 { padding-left: 15px; }

.twist {
  flex: none;
  width: 6px;
  height: 5px;
}

.tree .level0 .twist {
  display: none;
}

.twist.closed {
  width: 3px;
  height: 4px;
  margin-right: 3px;
  border: 2px solid transparent;
  border-left: 3px solid #666;
  border-right: 0;
}

.twist.opened {
  width: 4px;
  height: 3px;
  margin-right: 2px;
  border: 2px solid transparent;
  border-top: 3px solid #666;
  border-bottom: 0;
}

.node {
  display: flex;
  align-items: center;
  gap: 3px;
  height: 12px;
}

.tree.study {
  border: 0;
}

.bold {
  font-weight: 700;
  color: #111;
}

.selected .node {
  padding-right: 2px;
  background: #a3c6e2;
  outline: 1px solid #6fa3cc;
}

.vscroll {
  display: flex;
  flex-direction: column;
  align-items: center;
  width: 11px;
  padding: 4px 0;
  background: #eee;
}

.vscroll b {
  width: 9px;
  height: 17px;
  margin-top: auto;
  margin-bottom: 7px;
  background: #cbcbcb;
}

.hscroll {
  display: flex;
  align-items: center;
  height: 12px;
  padding: 0 13px 0 4px;
  background: #eee;
}

.hscroll b {
  width: 78px;
  height: 10px;
  margin: 0 auto 0 3px;
  background: #ccc;
}

.chev {
  width: 4px;
  height: 4px;
  border-top: 1px solid #555;
  border-right: 1px solid #555;
}

.chev.right { transform: rotate(45deg); }
.chev.left { transform: rotate(-135deg); }
.chev.up { transform: rotate(-45deg); }
.chev.down { transform: rotate(135deg); }

/* Graphics area */
.viewport {
  position: relative;
  display: grid;
  grid-template-columns: 1fr auto 1fr;
  flex: 1;
  min-width: 0;
  background: #fefefe;
}

.model {
  position: absolute;
  inset: 0;
  width: 100%;
  height: 100%;
}

.view-left,
.view-tools,
.view-right {
  position: relative;
}

.view-left {
  display: flex;
  flex-direction: column;
  justify-content: space-between;
  align-items: flex-start;
}

.notes {
  padding: 8px 0 0 11px;
  line-height: 11px;
  white-space: nowrap;
}

.handle {
  justify-content: center;
  width: 6px;
  height: 26px;
  margin-top: 8px;
  border: 1px solid #bbb;
  border-left: 0;
  background: #f5f5f5;
}

.triad {
  width: 44px;
  height: 40px;
  margin: 0 0 24px 8px;
  font-size: 6px;
}

.view-tools {
  display: flex;
  align-self: start;
  gap: 4px;
  padding-top: 3px;
}

.view-tools button {
  gap: 4px;
}

.view-tools .caret {
  border-top-color: #999;
}

.view-right {
  display: flex;
  justify-content: flex-end;
  align-items: flex-start;
  gap: 59px;
}

.legend h2 {
  margin: 85px 0 15px 16px;
  white-space: nowrap;
}

.scale {
  display: flex;
}

.scale .marker {
  margin-top: 28px;
}

.marker {
  flex: none;
  width: 16px;
  height: 10px;
}

.bar {
  width: 18px;
  height: 214px;
  margin-top: 5px;
  background: linear-gradient(#f80c0c, #fc4c00 7%, #fc9a00 14%, #f8f400 20%, #b8fc00 28%, #58fc00 38%, #00f818 50%, #00fca0 61%, #00fcfc 71%, #00a8fc 81%, #0050fc 90%, #0008fc 97%);
}

.scale ol {
  display: flex;
  flex-direction: column;
  justify-content: space-between;
  height: 223px;
  margin-top: -3px;
}

.scale li {
  padding-left: 8px;
}

.scale li::before {
  content: "";
  position: absolute;
  width: 2px;
  height: 1px;
  margin: 8px 0 0 -8px;
  background: #555;
}

.yield {
  display: flex;
  align-items: center;
  gap: 2px;
  margin-top: 12px;
}

.taskpane {
  width: 18px;
  margin-top: 16px;
  border-left: 1px solid #aaa;
}

.taskpane button {
  justify-content: center;
  width: 100%;
  height: 16px;
  border-bottom: 1px solid #aaa;
  background: #d3d3d3;
}

.taskpane .active {
  border-top: 1px solid #bbb;
  background: #f8f8f8;
}

/* Bottom bars */
.sheet-tabs {
  display: flex;
  height: 12px;
  border-top: 1px solid #aaa;
  border-bottom: 1px solid #bbb;
}

.steps {
  display: flex;
  width: 44px;
  background: #a9adb8;
}

.steps button {
  flex: 1;
  justify-content: center;
  border: 1px solid #9498a4;
  color: #777b88;
}

.sheet {
  padding: 0 8px;
  border-right: 1px solid #aaa;
  background: #d5d5d5;
}

.sheet.active {
  background: #f7f7f7;
  font-weight: 700;
  color: #111;
}

.rest {
  flex: 1;
  background: #f9f9f9;
}

.status {
  display: flex;
  align-items: center;
  height: 10px;
  padding-right: 1px;
}

.mode {
  margin-left: auto;
}

.units {
  gap: 20px;
  margin: 0 13px 0 73px;
}
</style>
